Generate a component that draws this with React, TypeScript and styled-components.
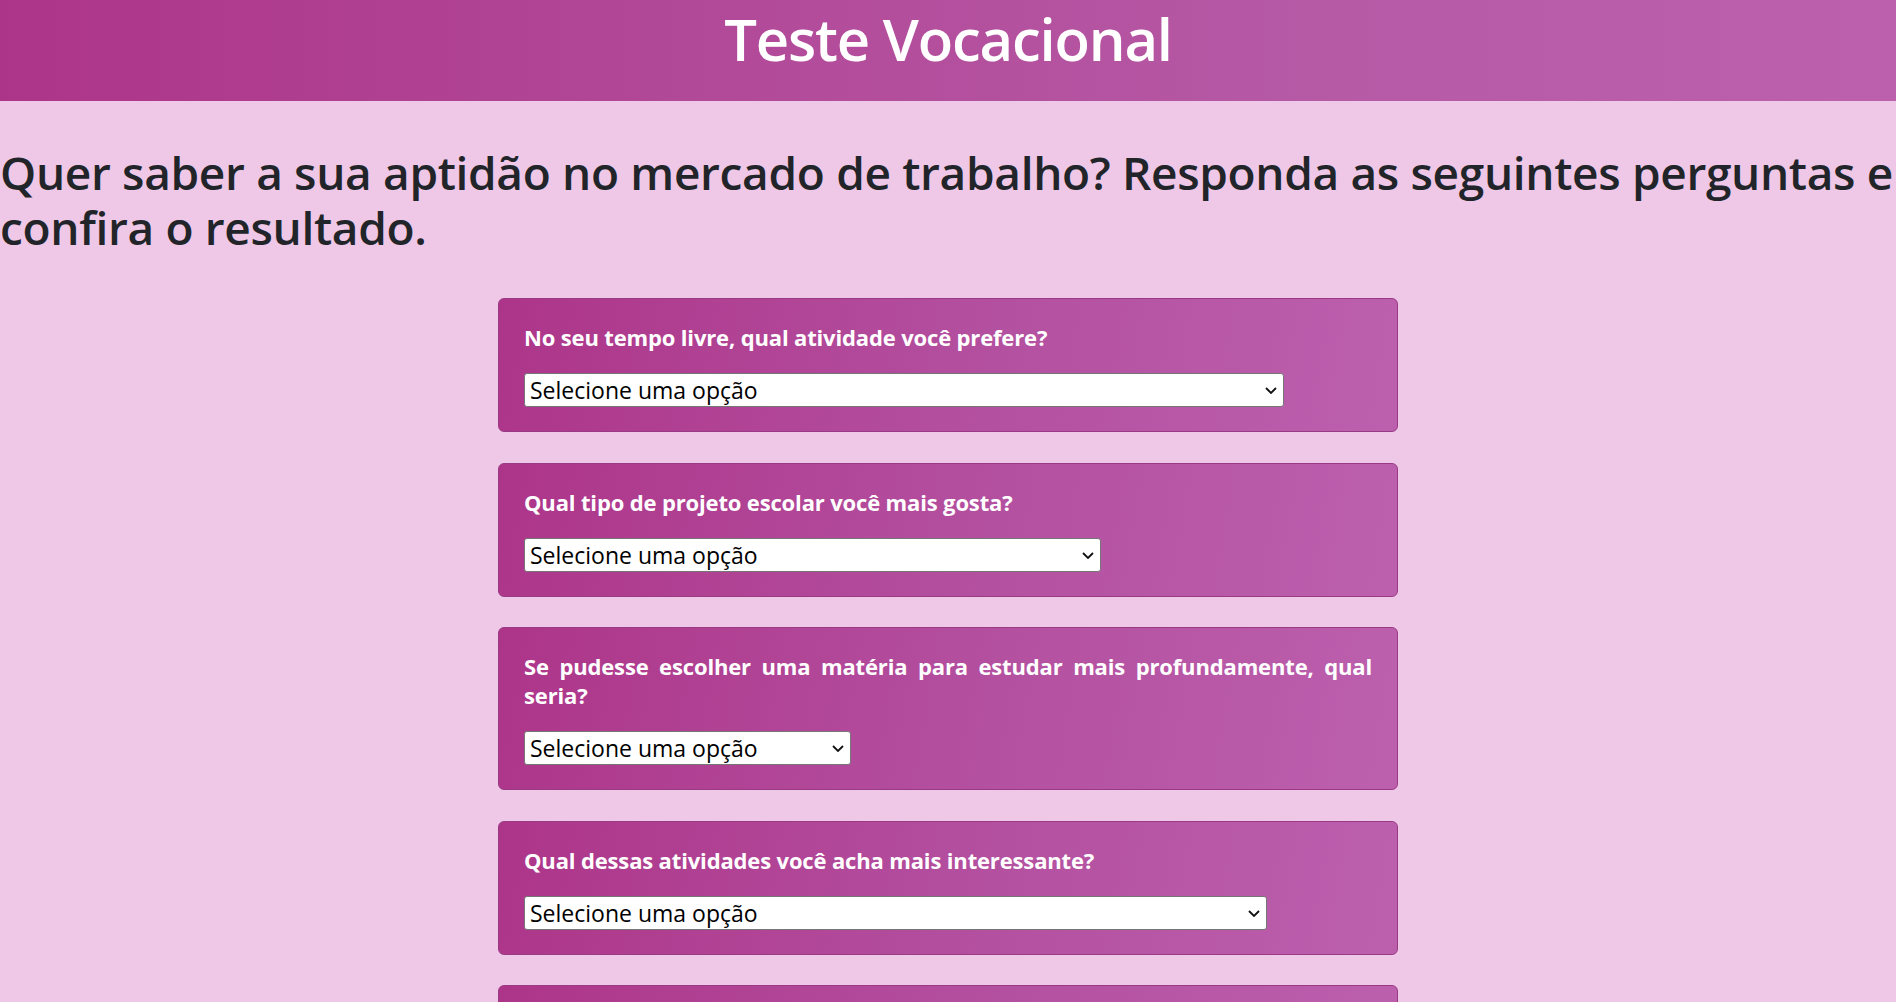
import React from "react";
import styled, { createGlobalStyle } from "styled-components";

const GlobalStyle = createGlobalStyle`
  html, body {
    margin: 0;
    padding: 0;
    background: #efc7e7;
  }
  body {
    font-family: "Open Sans", "Noto Sans", sans-serif;
    color: #212529;
    overflow-x: hidden;
  }
`;

const Header = styled.header`
  height: 101px;
  padding-top: 4px;
  box-sizing: border-box;
  background: linear-gradient(90deg, #ad3589 0%, #b65aa6 70%, #bc60ae 100%);
  text-align: center;
`;

const Title = styled.h1`
  margin: 0;
  font-size: 58px;
  line-height: 1.2;
  font-weight: 600;
  letter-spacing: -1.2px;
  color: #ffffff;
`;

const Intro = styled.h2`
  margin: 44px 0 43px;
  font-size: 46px;
  line-height: 1.2;
  font-weight: 600;
  letter-spacing: -0.33px;
  color: #212529;
`;

const Quiz = styled.form`
  width: 900px;
  margin: 0 auto;
  display: flex;
  flex-direction: column;
  gap: 30.5px;
`;

const Card = styled.div`
  border: 1px solid #9a3a84;
  border-radius: 6px;
  padding: 24px 25px 24px 25px;
  background: linear-gradient(100deg, #ad3589 0%, #b450a0 55%, #bc60ae 100%);
`;

const Question = styled.label`
  display: block;
  margin-bottom: 21px;
  font-size: 22px;
  line-height: 29px;
  font-weight: 700;
  letter-spacing: -0.15px;
  text-align: justify;
  color: #ffffff;
`;

const SelectWrap = styled.div<{ $width: number }>`
  position: relative;
  width: ${(p) => p.$width}px;
  height: 34px;
`;

const Select = styled.select`
  appearance: none;
  width: 100%;
  height: 100%;
  box-sizing: border-box;
  padding: 0 30px 0 5px;
  border: 1px solid #767676;
  border-radius: 3px;
  background: #ffffff;
  font-family: "Open Sans", "Noto Sans", sans-serif;
  font-size: 23px;
  color: #000000;
`;

const Chevron = styled.svg`
  position: absolute;
  right: 7px;
  top: 14px;
  width: 12px;
  height: 7px;
  pointer-events: none;
`;

type Item = { question: string; width: number };

const items: Item[] = [
  { question: "No seu tempo livre, qual atividade você prefere?", width: 760 },
  { question: "Qual tipo de projeto escolar você mais gosta?", width: 577 },
  {
    question:
      "Se pudesse escolher uma matéria para estudar mais profundamente, qual seria?",
    width: 327,
  },
  { question: "Qual dessas atividades você acha mais interessante?", width: 743 },
  { question: "Como você prefere trabalhar em um projeto?", width: 600 },
];

function QuestionCard({ item, index }: { item: Item; index: number }) {
  return (
    <Card>
      <Question htmlFor={`q${index}`}>{item.question}</Question>
      <SelectWrap $width={item.width}>
        <Select id={`q${index}`} defaultValue="">
          <option value="">Selecione uma opção</option>
        </Select>
        <Chevron viewBox="0 0 12 7">
          <path d="M1 1l5 5 5-5" fill="none" stroke="#111" strokeWidth="1.8" />
        </Chevron>
      </SelectWrap>
    </Card>
  );
}

export default function App() {
  return (
    <>
      <GlobalStyle />
      <Header>
        <Title>Teste Vocacional</Title>
      </Header>
      <Intro>
        Quer saber a sua aptidão no mercado de trabalho? Responda as seguintes
        perguntas e confira o resultado.
      </Intro>
      <Quiz>
        {items.map((item, i) => (
          <QuestionCard key={i} item={item} index={i} />
        ))}
      </Quiz>
    </>
  );
}
